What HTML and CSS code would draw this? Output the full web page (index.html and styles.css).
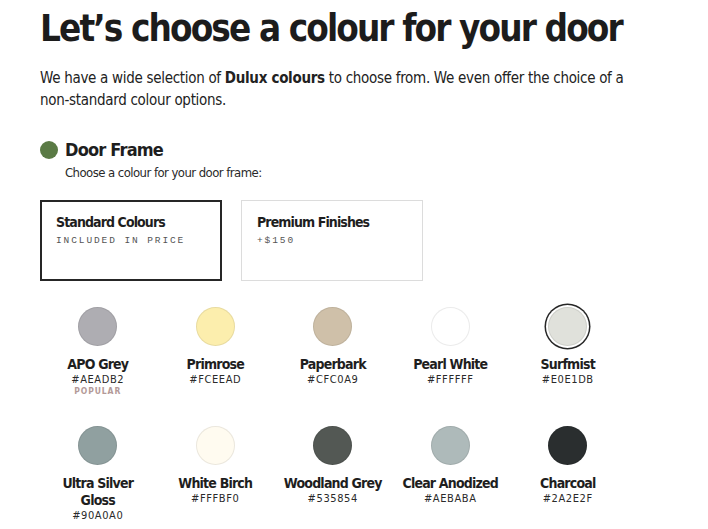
FILE: index.html
```html
<!DOCTYPE html>
<html lang="en">
<head>
<meta charset="utf-8">
<title>Choose a colour</title>
<link rel="stylesheet" href="styles.css">
</head>
<body>
<main class="page">
  <h1 class="title">Let’s choose a colour for your door</h1>
  <p class="intro">We have a wide selection of <strong>Dulux colours</strong> to choose from. We even offer the choice of a non-standard colour options.</p>

  <section class="section">
    <div class="section-head">
      <span class="dot"></span>
      <h2 class="section-title">Door Frame</h2>
    </div>
    <p class="section-sub">Choose a colour for your door frame:</p>

    <div class="tabs">
      <div class="tab tab-active">
        <div class="tab-title">Standard Colours</div>
        <div class="tab-sub">INCLUDED IN PRICE</div>
      </div>
      <div class="tab">
        <div class="tab-title">Premium Finishes</div>
        <div class="tab-sub">+$150</div>
      </div>
    </div>

    <div class="swatches">
      <div class="swatch">
        <span class="chip" style="background:#AEADB2"></span>
        <div class="name">APO Grey</div>
        <div class="hex">#AEADB2</div>
        <div class="tag">POPULAR</div>
      </div>
      <div class="swatch">
        <span class="chip" style="background:#FCEEAD"></span>
        <div class="name">Primrose</div>
        <div class="hex">#FCEEAD</div>
      </div>
      <div class="swatch">
        <span class="chip" style="background:#CFC0A9"></span>
        <div class="name">Paperbark</div>
        <div class="hex">#CFC0A9</div>
      </div>
      <div class="swatch">
        <span class="chip" style="background:#FFFFFF"></span>
        <div class="name">Pearl White</div>
        <div class="hex">#FFFFFF</div>
      </div>
      <div class="swatch">
        <span class="chip chip-selected" style="background:#E0E1DB"></span>
        <div class="name">Surfmist</div>
        <div class="hex">#E0E1DB</div>
      </div>
      <div class="swatch">
        <span class="chip" style="background:#90A0A0"></span>
        <div class="name">Ultra Silver Gloss</div>
        <div class="hex">#90A0A0</div>
      </div>
      <div class="swatch">
        <span class="chip" style="background:#FFFBF0"></span>
        <div class="name">White Birch</div>
        <div class="hex">#FFFBF0</div>
      </div>
      <div class="swatch">
        <span class="chip" style="background:#535854"></span>
        <div class="name">Woodland Grey</div>
        <div class="hex">#535854</div>
      </div>
      <div class="swatch">
        <span class="chip" style="background:#AEBABA"></span>
        <div class="name">Clear Anodized</div>
        <div class="hex">#AEBABA</div>
      </div>
      <div class="swatch">
        <span class="chip" style="background:#2A2E2F"></span>
        <div class="name">Charcoal</div>
        <div class="hex">#2A2E2F</div>
      </div>
    </div>
  </section>
</main>
</body>
</html>
```

FILE: styles.css
```css
* { box-sizing: border-box; }

html, body {
  margin: 0;
  padding: 0;
  background: #fff;
}

body {
  font-family: "DejaVu Sans Condensed", "Noto Sans", sans-serif;
  color: #1e1e1e;
}

.page {
  padding: 6px 40px 0 40px;
}

.title {
  margin: 0;
  font-size: 36.5px;
  line-height: 46px;
  font-weight: 700;
  letter-spacing: -1.9px;
  color: #1c1c1c;
  white-space: nowrap;
}

.intro {
  margin: 15px 0 0 0;
  font-size: 15px;
  line-height: 22px;
  letter-spacing: -0.3px;
  max-width: 600px;
  color: #222;
}

.intro strong { font-weight: 700; }

.section { margin-top: 27px; }

.section-head {
  display: flex;
  align-items: center;
  gap: 7px;
}

.dot {
  width: 18px;
  height: 18px;
  border-radius: 50%;
  background: #5a7a45;
  flex: none;
}

.section-title {
  margin: 0;
  font-size: 18px;
  line-height: 24px;
  font-weight: 700;
  letter-spacing: -0.8px;
}

.section-sub {
  margin: 2px 0 0 25px;
  font-size: 13px;
  line-height: 18px;
  letter-spacing: -0.55px;
  color: #2a2a2a;
}

.tabs {
  display: flex;
  gap: 19px;
  margin-top: 18px;
}

.tab {
  width: 182px;
  height: 81px;
  border: 1px solid #dcdcdc;
  padding: 12px 15px;
}

.tab-active {
  border: 2px solid #262626;
  padding: 11px 14px;
}

.tab-title {
  font-size: 14px;
  line-height: 18px;
  font-weight: 700;
  letter-spacing: -0.9px;
  color: #1e1e1e;
}

.tab-sub {
  margin-top: 3px;
  font-family: "Liberation Mono", "DejaVu Sans Mono", monospace;
  font-size: 9.5px;
  line-height: 14px;
  letter-spacing: 1.9px;
  color: #555;
}

.swatches {
  display: grid;
  grid-template-columns: repeat(5, 117.5px);
  row-gap: 29px;
  margin-top: 26px;
  margin-left: -1px;
}

.swatch {
  display: flex;
  flex-direction: column;
  align-items: center;
  text-align: center;
}

.chip {
  width: 39px;
  height: 39px;
  border-radius: 50%;
  border: 1px solid rgba(0, 0, 0, 0.08);
  margin-bottom: 10px;
}

.chip-selected {
  box-shadow: 0 0 0 2px #fff, 0 0 0 3.5px #262626;
}

.name {
  font-size: 14px;
  line-height: 17px;
  font-weight: 700;
  letter-spacing: -0.8px;
  max-width: 103px;
  color: #1e1e1e;
}

.hex {
  font-size: 11px;
  line-height: 13px;
  letter-spacing: 0.6px;
  color: #2a2a2a;
}

.tag {
  font-size: 8.5px;
  line-height: 11px;
  letter-spacing: 0.9px;
  color: #b49a98;
  font-weight: 700;
}
```
